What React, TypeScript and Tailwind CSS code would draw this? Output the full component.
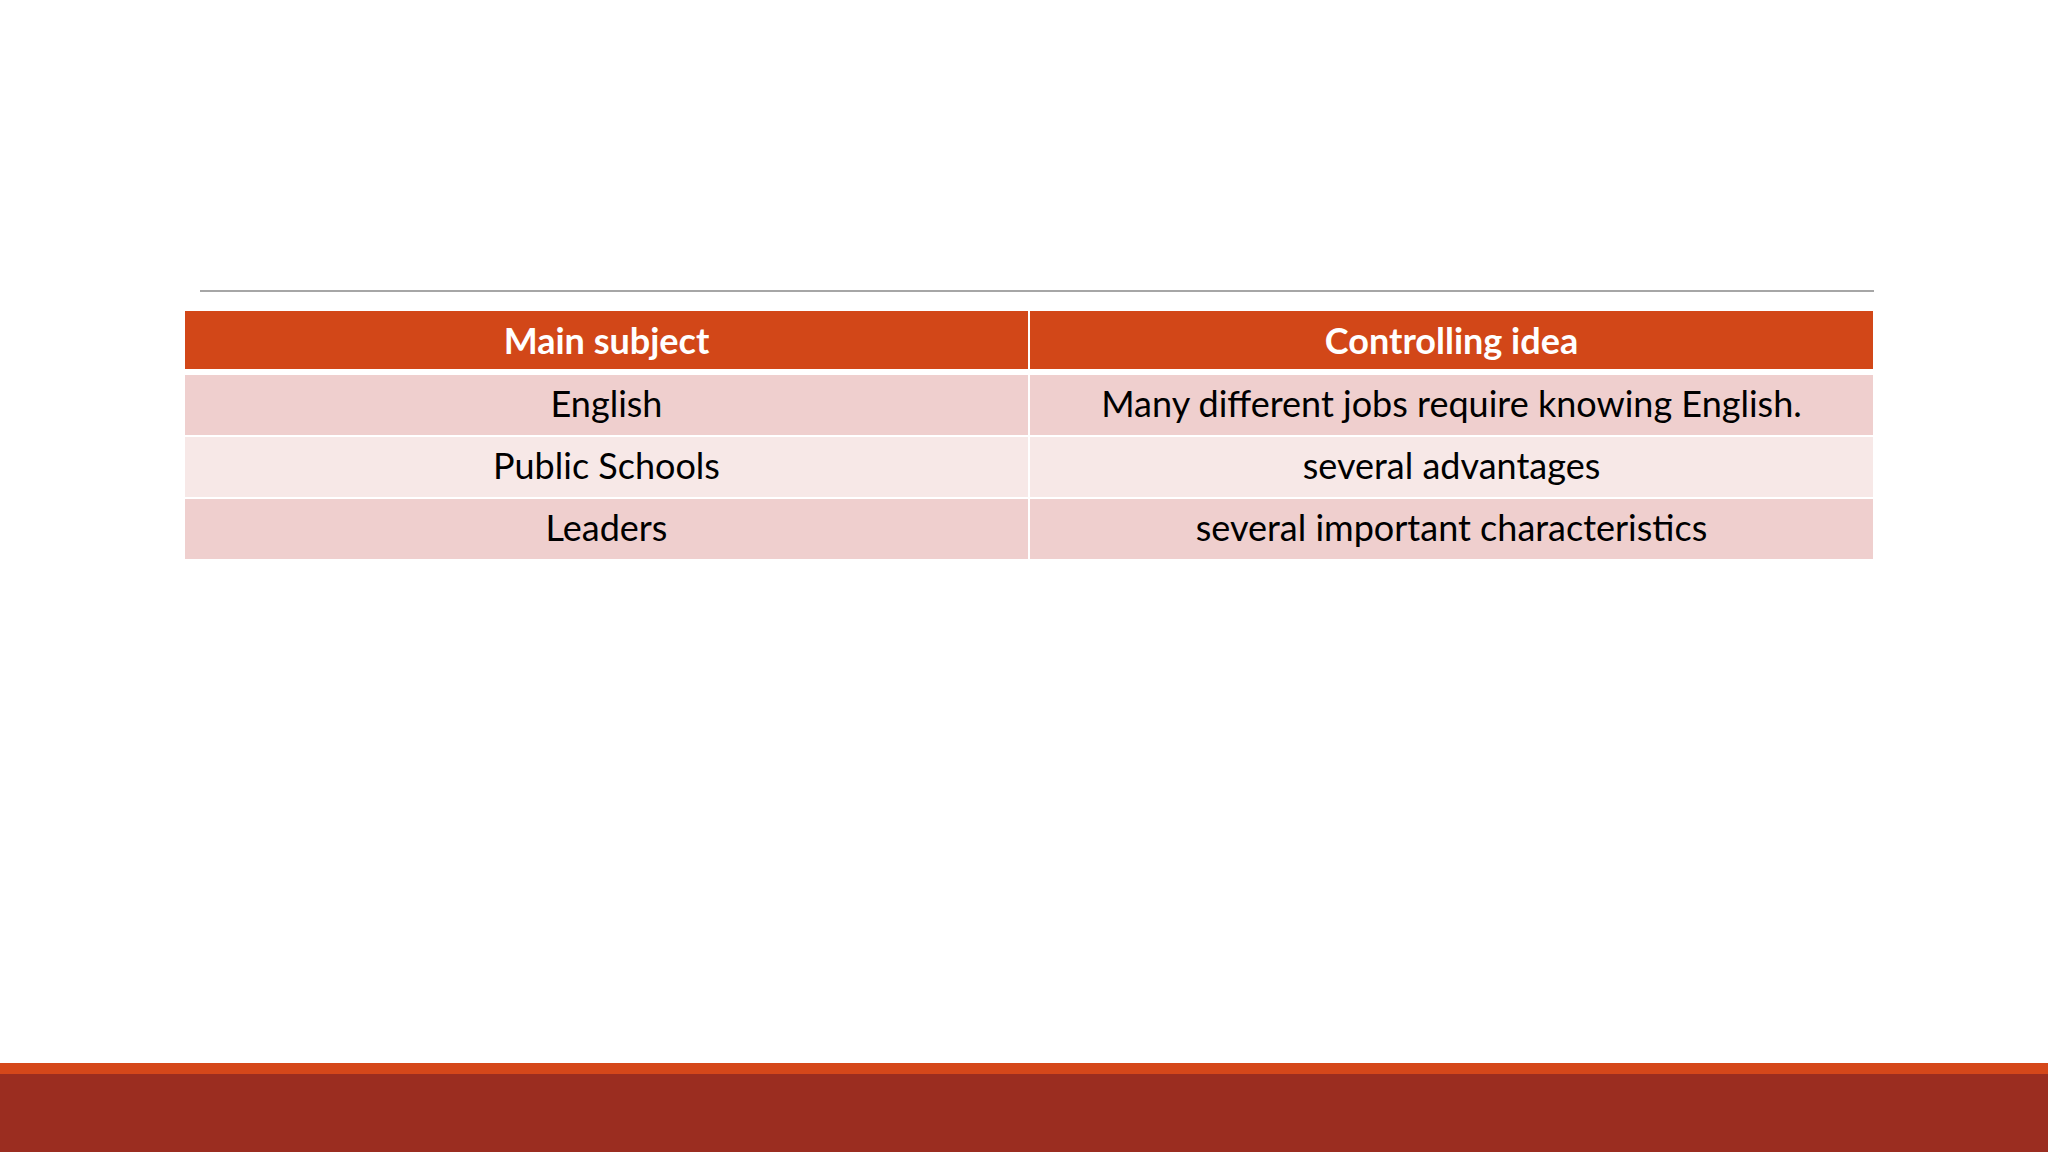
const rows = [
  { subject: 'English', idea: 'Many different jobs require knowing English.', bg: 'bg-[#efcfce]' },
  { subject: 'Public Schools', idea: 'several advantages', bg: 'bg-[#f7e8e7]' },
  { subject: 'Leaders', idea: 'several important characteristics', bg: 'bg-[#efcfce]' },
]

export default function App() {
  return (
    <div className="flex h-[1152px] w-[2048px] flex-col overflow-hidden bg-white font-['Lato',sans-serif]">
      <div className="h-[290px]" />
      <div className="ml-[200px] h-[2px] w-[1674px] bg-[#a6a6a6]" />

      <div className="ml-[185px] mt-[19px] w-[1688px]">
        <div className="grid h-[58px] grid-cols-2 gap-x-[2px] text-[36px] font-bold leading-none text-white">
          <div className="flex items-center justify-center bg-[#d24718]">Main subject</div>
          <div className="flex items-center justify-center bg-[#d24718]">Controlling idea</div>
        </div>
        <div className="mt-[6px] flex flex-col gap-y-[2px]">
          {rows.map((r) => (
            <div key={r.subject} className="grid h-[60px] grid-cols-2 gap-x-[2px] text-[36px] leading-none text-black">
              <div className={`flex items-center justify-center pb-[4px] ${r.bg}`}>{r.subject}</div>
              <div className={`flex items-center justify-center pb-[4px] ${r.bg}`}>{r.idea}</div>
            </div>
          ))}
        </div>
      </div>

      <div className="flex-1" />
      <div className="h-[11px] bg-[#d5471a]" />
      <div className="h-[78px] bg-[#9b2d20]" />
    </div>
  )
}
